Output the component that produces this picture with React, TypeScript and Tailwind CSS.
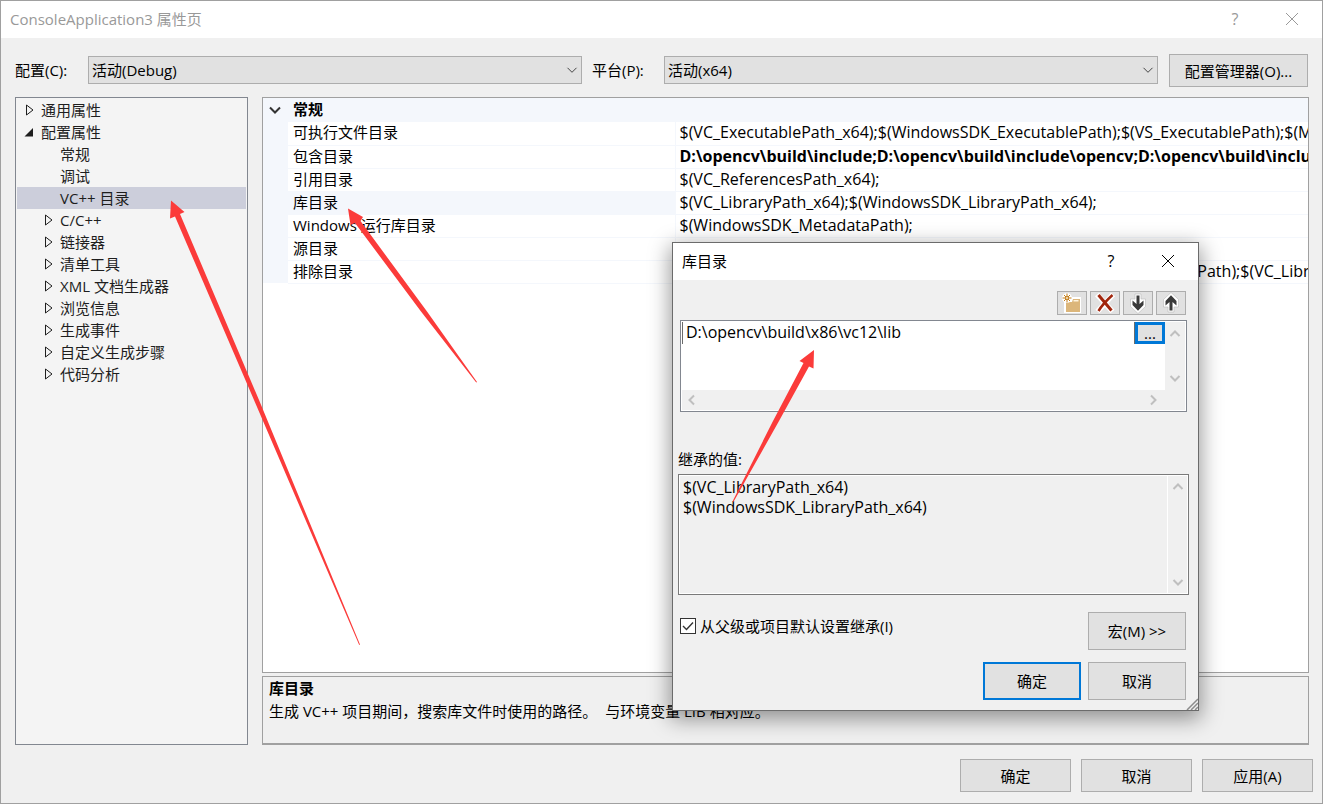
import { useState } from "react";
import type { ReactNode } from "react";
import clsx from "clsx";

type TreeNode = {
    label: string;
    level: number;
    state?: "open" | "closed";
};

const tree: TreeNode[] = [
    { label: "通用属性", level: 0, state: "closed" },
    { label: "配置属性", level: 0, state: "open" },
    { label: "常规", level: 1 },
    { label: "调试", level: 1 },
    { label: "VC++ 目录", level: 1 },
    { label: "C/C++", level: 1, state: "closed" },
    { label: "链接器", level: 1, state: "closed" },
    { label: "清单工具", level: 1, state: "closed" },
    { label: "XML 文档生成器", level: 1, state: "closed" },
    { label: "浏览信息", level: 1, state: "closed" },
    { label: "生成事件", level: 1, state: "closed" },
    { label: "自定义生成步骤", level: 1, state: "closed" },
    { label: "代码分析", level: 1, state: "closed" },
];

const properties = [
    { name: "可执行文件目录", value: "$(VC_ExecutablePath_x64);$(WindowsSDK_ExecutablePath);$(VS_ExecutablePath);$(MSBuild_ExecutablePath)" },
    { name: "包含目录", value: "D:\\opencv\\build\\include;D:\\opencv\\build\\include\\opencv;D:\\opencv\\build\\include\\opencv2", bold: true },
    { name: "引用目录", value: "$(VC_ReferencesPath_x64);" },
    { name: "库目录", value: "$(VC_LibraryPath_x64);$(WindowsSDK_LibraryPath_x64);", selected: true },
    { name: "Windows 运行库目录", value: "$(WindowsSDK_MetadataPath);" },
    { name: "源目录", value: "$(VC_SourcePath);" },
    { name: "排除目录", value: "$(VC_IncludePath);$(WindowsSDK_IncludePath);$(MSBuild_ExecutablePath);$(VC_LibraryPath_x64)" },
];

function Chevron({ className }: { className?: string }) {
    return (
        <svg viewBox="0 0 12 12" className={clsx("size-3", className)} fill="none" stroke="currentColor" aria-hidden="true">
            <path d="M1.5 3.8 6 8.3l4.5-4.5" />
        </svg>
    );
}

function Cross() {
    return (
        <svg viewBox="0 0 14 14" className="size-3.5" fill="none" stroke="currentColor" aria-hidden="true">
            <path d="m1 1 12 12M13 1 1 13" />
        </svg>
    );
}

function TitleBar({ title, className }: { title: string; className?: string }) {
    return (
        <div className={clsx("flex items-center bg-white pr-0.5 pb-0.5", className)}>
            <h1 className="flex-1">{title}</h1>
            <button type="button" aria-label="Help" className="flex w-[58px] justify-center text-base">?</button>
            <button type="button" aria-label="Close" className="flex w-[56px] justify-center"><Cross /></button>
        </div>
    );
}

function Button({ children, className }: { children: ReactNode; className?: string }) {
    return (
        <button type="button" className={clsx("bg-[#e1e1e1] text-center", className)}>
            {children}
        </button>
    );
}

function Dropdown({ id, value }: { id: string; value: string }) {
    return (
        <div className="relative mt-0.5 flex-1">
            <select id={id} className="block h-7 w-full appearance-none border border-[#adadad] bg-[#e1e1e1] pl-[3px]">
                <option>{value}</option>
            </select>
            <Chevron className="pointer-events-none absolute top-2 right-1 text-[#444]" />
        </div>
    );
}

function Toggle({ state }: { state?: "open" | "closed" }) {
    return (
        <svg viewBox="0 0 12 12" className="mr-1.5 size-3 shrink-0" aria-hidden="true">
            {state === "closed" && <path d="M3.5 1v10L10 6z" fill="none" stroke="#1e1e1e" />}
            {state === "open" && <path d="M10 2v8.500H1.500z" fill="#1e1e1e" />}
        </svg>
    );
}

function Tree() {
    const [selected, setSelected] = useState("VC++ 目录");

    return (
        <nav className="w-[233px] shrink-0 border border-[#828790] bg-[#f4f4f4] p-px text-[#1e1e1e]">
            {tree.map((node) => (
                <button
                    key={node.label}
                    type="button"
                    onClick={() => setSelected(node.label)}
                    className={clsx(
                        "flex h-[22px] w-full items-center whitespace-nowrap",
                        node.level === 0 ? "pl-1.5" : "pl-[25px]",
                        selected === node.label && "bg-[#cccedb]"
                    )}
                >
                    <Toggle state={node.state} />
                    {node.label}
                </button>
            ))}
        </nav>
    );
}

function PropertyGrid() {
    return (
        <div className="flex-1 overflow-hidden border border-[#a0a0a0] bg-white">
            <table className="w-full table-fixed border-collapse">
                <colgroup>
                    <col className="w-[25px]" />
                    <col className="w-[387px]" />
                    <col />
                </colgroup>
                <thead>
                    <tr className="h-6 bg-[#f4f7fc] text-left">
                        <th className="p-0">
                            <svg viewBox="0 0 12 12" className="ml-1.5 size-3" fill="none" stroke="#333" strokeWidth="2" aria-hidden="true">
                                <path d="m1 3.5 5 5 5-5" />
                            </svg>
                        </th>
                        <th colSpan={2} className="pt-0 pb-0.5 pl-[5px] leading-5">常规</th>
                    </tr>
                </thead>
                <tbody>
                    {properties.map((property) => (
                        <tr key={property.name} className="h-[23px] leading-5">
                            <td className="bg-[#f4f7fc] p-0" />
                            <td className={clsx("border-r border-b border-[#f4f7fc] pt-0 pb-0.5 pl-[5px]", property.selected && "bg-[#f4f7fc]")}>
                                {property.name}
                            </td>
                            <td className={clsx("overflow-hidden border-b border-[#f4f7fc] pt-0 pb-0.5 pl-1 text-base leading-5 whitespace-nowrap", property.bold && "font-bold")}>
                                {property.value}
                            </td>
                        </tr>
                    ))}
                </tbody>
            </table>
        </div>
    );
}

function NewFolderIcon() {
    return (
        <svg viewBox="0 0 22 22" className="size-[22px]" aria-hidden="true">
            <path d="M3 9h6V5h11v16H3z" fill="#fff" />
            <path d="M5 10h6l1-3h7v13H5z" fill="#dcb67a" />
            <path d="M12.500 8h5v1.500h-5z" fill="#fff3dc" />
            <circle cx="6" cy="6" r="5" fill="#fff" />
            <path d="M6 1.500v9M1.500 6h9M3 3l6 6M9 3 3 9" stroke="#c27d1a" strokeWidth="1" />
            <circle cx="6" cy="6" r="1.500" fill="#fff3dc" stroke="#c27d1a" />
        </svg>
    );
}

function DeleteIcon() {
    return (
        <svg viewBox="0 0 22 22" className="size-[22px]" fill="none" aria-hidden="true">
            <path d="M3 2.500 18.500 19.500M19 2.500 3.500 19.500" stroke="#fff" strokeWidth="5.500" />
            <path d="m4.500 3 13 15.500" stroke="#a1260d" strokeWidth="3" />
            <path d="M18.500 3C13 8 8 13 4.500 19" stroke="#a1260d" strokeWidth="2.500" />
        </svg>
    );
}

function ArrowIcon({ className }: { className?: string }) {
    return (
        <svg viewBox="0 0 22 22" className={clsx("size-[22px]", className)} aria-hidden="true">
            <path d="M8 2h6v5h4.500v7.500L11 21.500l-7.500-7V7H8z" fill="#fff" stroke="#bbb" strokeWidth=".6" />
            <path d="M9.500 3.500h3v8.500l4-3.500v4.500L11 18.800 5.500 13V8.500l4 3.500z" fill="#3a3a3a" />
        </svg>
    );
}

function ToolButton({ label, children }: { label: string; children: ReactNode }) {
    return (
        <button type="button" aria-label={label} className="flex h-6 w-[30px] items-center justify-center border border-[#adadad] bg-[#e1e1e1]">
            {children}
        </button>
    );
}

function ScrollArrow({ className }: { className?: string }) {
    return (
        <svg viewBox="0 0 12 12" className={clsx("size-3 text-[#bfbfbf]", className)} fill="none" stroke="currentColor" strokeWidth="2" aria-hidden="true">
            <path d="m1.500 4 4.500 4.500L10.500 4" />
        </svg>
    );
}

function VerticalScroll() {
    return (
        <div className="flex w-5 shrink-0 flex-col items-center justify-between py-1.5">
            <ScrollArrow className="rotate-180" />
            <ScrollArrow />
        </div>
    );
}

function LibraryDialog() {
    const [path, setPath] = useState("D:\\opencv\\build\\x86\\vc12\\lib");
    const [inherit, setInherit] = useState(true);

    return (
        <div role="dialog" aria-label="库目录" className="absolute top-[241px] left-[671px] w-[527px] border border-[#6b6b6b] bg-[#f0f0f0] shadow-[0_6px_20px_2px_rgba(0,0,0,0.4)]">
            <TitleBar title="库目录" className="h-[37px] pl-[9px]" />

            <div className="mt-[11px] mr-3 flex justify-end gap-[3px]">
                <ToolButton label="New line"><NewFolderIcon /></ToolButton>
                <ToolButton label="Delete"><DeleteIcon /></ToolButton>
                <ToolButton label="Move down"><ArrowIcon /></ToolButton>
                <ToolButton label="Move up"><ArrowIcon className="rotate-180" /></ToolButton>
            </div>

            <div className="mt-[5px] mr-[11px] ml-[7px] border border-[#828790] bg-white p-px">
                <div className="flex h-[68px]">
                    <div className="flex flex-1 items-start">
                        <input
                            aria-label="Path"
                            value={path}
                            onChange={(e) => setPath(e.target.value)}
                            className="h-[22px] min-w-0 flex-1 border-x border-[#6b6b6b] px-[3px] pb-0.5 text-base leading-5 outline-none"
                        />
                        <Button className="h-[22px] w-[30px] border-3 border-[#0078d7] leading-4">...</Button>
                    </div>
                    <div className="flex bg-[#f0f0f0]"><VerticalScroll /></div>
                </div>
                <div className="flex h-5 items-center justify-between bg-[#f0f0f0] pr-[26px] pl-1">
                    <ScrollArrow className="rotate-90" />
                    <ScrollArrow className="-rotate-90" />
                </div>
            </div>

            <label htmlFor="inherited" className="mt-9 ml-[5px] block leading-[22px]">继承的值:</label>
            <div className="mt-1 mr-[9px] ml-[5px] flex border border-[#7a7a7a] outline-1 -outline-offset-2 outline-white">
                <textarea
                    id="inherited"
                    readOnly
                    rows={2}
                    value={"$(VC_LibraryPath_x64)\n$(WindowsSDK_LibraryPath_x64)"}
                    className="h-[119px] flex-1 resize-none overflow-hidden border-r border-white px-1 py-0.5 text-base leading-5 outline-none"
                />
                <VerticalScroll />
            </div>

            <div className="mt-[17px] mr-3 ml-[7px] flex items-start justify-between">
                <label className="relative mt-[3px] flex items-center gap-1 leading-[22px]">
                    <input
                        type="checkbox"
                        checked={inherit}
                        onChange={(e) => setInherit(e.target.checked)}
                        className="size-4 appearance-none border border-[#333] bg-white"
                    />
                    {inherit && (
                        <svg viewBox="0 0 16 16" className="pointer-events-none absolute left-0 size-4" fill="none" stroke="#333" strokeWidth="1.400" aria-hidden="true">
                            <path d="m3 8 3.500 3.500L13 4.500" />
                        </svg>
                    )}
                    从父级或项目默认设置继承(I)
                </label>
                <Button className="h-[38px] w-[98px] border border-[#adadad]">宏(M) &gt;&gt;</Button>
            </div>

            <div className="mt-3 mr-3 mb-2.5 flex justify-end gap-[7px]">
                <Button className="h-[38px] w-[98px] border-2 border-[#0078d7]">确定</Button>
                <Button className="h-[38px] w-[98px] border border-[#adadad]">取消</Button>
            </div>

            <svg viewBox="0 0 12 12" className="absolute right-0 bottom-0 size-3" fill="none" aria-hidden="true">
                <path d="M1 12 12 1M5 12l7-7M9 12l3-3" stroke="#8c8c8c" strokeWidth="1.500" />
            </svg>
        </div>
    );
}

function Arrows() {
    return (
        <svg className="pointer-events-none absolute -top-px -left-px h-[804px] w-[1323px]" viewBox="0 0 1323 804" fill="#fb3b3a" aria-hidden="true">
            <path d="M171 200.500 184.500 212l-4.500 2L259 400l101 244.500-.8.500L254 400 175 216.500l-5 2z" />
            <path d="M348 208.500 363 217l-2.500 4 66.500 90.500 50 70.500-.8.500L421 311.500 355 223l-4.500 2z" />
            <path d="M814 350 799.500 361l4 2L773 421l-40.500 80.500.9.500L779 421l30-54.500 4.500 2z" />
        </svg>
    );
}

export default function App() {
    return (
        <div className="relative flex min-h-screen flex-col overflow-hidden border border-[#a0a0a0] bg-[#f0f0f0] font-['Open_Sans','Noto_Sans_CJK_SC',sans-serif] text-[15px] leading-[22px] text-black">
            <TitleBar title="ConsoleApplication3 属性页" className="h-[37px] pl-[9px] text-[#999]" />

            <main className="flex flex-1 flex-col pr-[13px] pl-3.5">
                <div className="mt-4 mr-px flex items-start">
                    <label htmlFor="configuration" className="mt-[5px] w-[73px]">配置(C):</label>
                    <Dropdown id="configuration" value="活动(Debug)" />
                    <label htmlFor="platform" className="mt-[5px] ml-2.5 w-[72px]">平台(P):</label>
                    <Dropdown id="platform" value="活动(x64)" />
                    <Button className="ml-[11px] h-[33px] w-[139px] border border-[#adadad]">配置管理器(O)...</Button>
                </div>

                <div className="mt-2.5 flex flex-1 gap-3.5">
                    <Tree />
                    <div className="flex min-w-0 flex-1 flex-col gap-[3px]">
                        <PropertyGrid />
                        <section className="h-[69px] border border-b-2 border-[#a0a0a0] px-1.5">
                            <h2 className="font-bold">库目录</h2>
                            <p className="leading-6">生成 VC++ 项目期间，搜索库文件时使用的路径。 &nbsp;与环境变量 LIB 相对应。</p>
                        </section>
                    </div>
                </div>
            </main>

            <footer className="mt-3.5 mr-[9px] mb-[11px] flex justify-end gap-2.5">
                <Button className="h-[33px] w-[111px] border border-[#adadad]">确定</Button>
                <Button className="h-[33px] w-[111px] border border-[#adadad]">取消</Button>
                <Button className="h-[33px] w-[111px] border border-[#adadad]">应用(A)</Button>
            </footer>

            <LibraryDialog />
            <Arrows />
        </div>
    );
}
